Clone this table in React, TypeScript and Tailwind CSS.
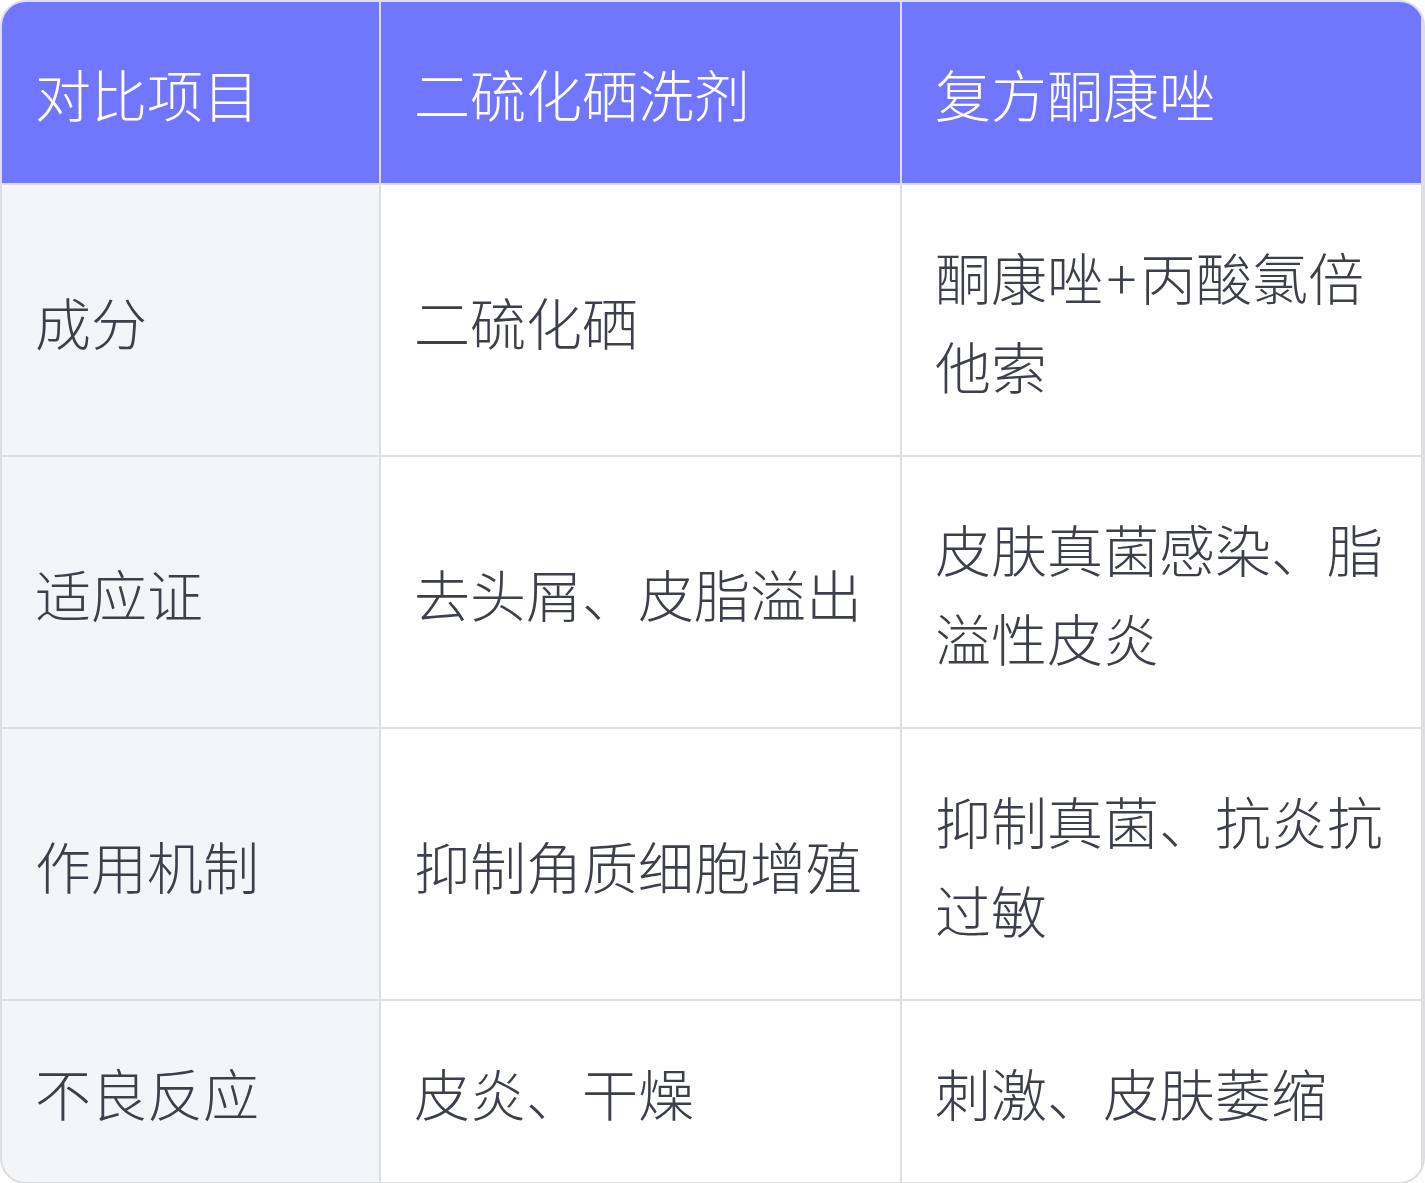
import React from 'react';

const headers = ['对比项目', '二硫化硒洗剂', '复方酮康唑'];

const rows = [
  ['成分', '二硫化硒', '酮康唑\u200A+\u200A丙酸氯倍他索'],
  ['适应证', '去头屑、皮脂溢出', '皮肤真菌感染、脂溢性皮炎'],
  ['作用机制', '抑制角质细胞增殖', '抑制真菌、抗炎抗过敏'],
  ['不良反应', '皮炎、干燥', '刺激、皮肤萎缩'],
];

function Cell({ children, className }: { children: React.ReactNode; className: string }) {
  return (
    <div className={'flex items-center px-[33px] py-[46px] leading-[89px] ' + className}>
      <span className="break-all">{children}</span>
    </div>
  );
}

export default function App() {
  return (
    <div
      className="h-[1183px] w-[1425px] bg-white"
      style={{ fontFamily: '"Noto Sans CJK SC", "Noto Sans", sans-serif' }}
    >
      <div className="overflow-hidden rounded-[26px] border-2 border-[#dedee2] bg-[#dedee2]">
        <div className="grid grid-cols-[377px_519px_519px] gap-[2px] text-[56px] font-light">
          {headers.map((h) => (
            <Cell key={h} className="bg-[#7076ff] text-white">
              {h}
            </Cell>
          ))}
          {rows.map((row, r) =>
            row.map((c, i) => (
              <Cell
                key={r + '-' + i}
                className={(i === 0 ? 'bg-[#f4f5f9]' : 'bg-white') + ' text-[#3d404a]'}
              >
                {c}
              </Cell>
            )),
          )}
        </div>
      </div>
    </div>
  );
}
